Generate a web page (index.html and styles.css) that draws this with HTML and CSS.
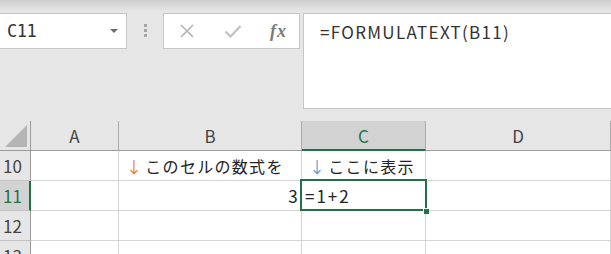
FILE: index.html
```html
<!DOCTYPE html>
<html lang="ja">
<head>
    <meta charset="UTF-8">
    <meta name="viewport" content="width=device-width, initial-scale=1.0">
    <title>FORMULATEXT</title>
    <link rel="stylesheet" href="styles.css">
</head>
<body>

    <!-- 数式バー -->
    <div class="toolbar">
        <div class="namebox">
            <span class="name">C11</span>
            <span class="caret"></span>
        </div>
        <div class="grip"><i></i><i></i><i></i></div>
        <div class="buttons">
            <svg class="btn" width="16" height="16" viewBox="0 0 16 16">
                <path d="M2 2 L14 14 M14 2 L2 14" stroke="#b3b3b3" stroke-width="1.6" fill="none"/>
            </svg>
            <svg class="btn" width="18" height="16" viewBox="0 0 18 16">
                <path d="M1.5 8.5 L6.5 13.5 L16.5 3" stroke="#c4c4c4" stroke-width="2.4" fill="none"/>
            </svg>
            <span class="fx">fx</span>
        </div>
        <div class="formula">=FORMULATEXT(B11)</div>
    </div>

    <!-- シート -->
    <div class="sheet">
        <div class="head corner"><span class="tri"></span></div>
        <div class="head col">A</div>
        <div class="head col">B</div>
        <div class="head col sel">C</div>
        <div class="head col">D</div>

        <div class="head row">10</div>
        <div class="cell"></div>
        <div class="cell"><span class="down orange">↓</span>このセルの数式を</div>
        <div class="cell"><span class="down blue">↓</span>ここに表示</div>
        <div class="cell"></div>

        <div class="head row sel">11</div>
        <div class="cell"></div>
        <div class="cell num">3</div>
        <div class="cell active">=1+2</div>
        <div class="cell"></div>

        <div class="head row">12</div>
        <div class="cell"></div>
        <div class="cell"></div>
        <div class="cell"></div>
        <div class="cell"></div>

        <div class="head row">13</div>
        <div class="cell"></div>
        <div class="cell"></div>
        <div class="cell"></div>
        <div class="cell"></div>
    </div>

</body>
</html>
```

FILE: styles.css
```css
body {
    margin: 0;
    width: 611px;
    height: 254px;
    overflow: hidden;
    background: #e6e6e6;
    font-family: "Noto Sans CJK JP", "Noto Sans", sans-serif;
}

/* 数式バー */
.toolbar {
    height: 121px;
    box-sizing: border-box;
    padding-top: 13px;
    display: flex;
    align-items: flex-start;
    background: linear-gradient(#cdcdcd, #e6e6e6 11px);
}
.toolbar > * {
    flex-shrink: 0;
}
.namebox {
    width: 127px;
    height: 36px;
    box-sizing: border-box;
    border: 1px solid #c6c6c6;
    border-left: none;
    background: #fff;
    display: flex;
    align-items: center;
    justify-content: space-between;
    padding: 0 8px 0 7px;
}
.name {
    font-family: "DejaVu Sans Mono", monospace;
    font-size: 17px;
    color: #333;
    letter-spacing: -0.5px;
}
.caret {
    width: 0;
    height: 0;
    border-left: 4px solid transparent;
    border-right: 4px solid transparent;
    border-top: 4px solid #6e6e6e;
}
.grip {
    display: flex;
    flex-direction: column;
    gap: 2px;
    margin: 11px 16px 0 17px;
}
.grip i {
    width: 3px;
    height: 3px;
    background: #a6a6a6;
}
.buttons {
    width: 137px;
    height: 36px;
    box-sizing: border-box;
    border: 1px solid #c6c6c6;
    background: #fff;
    display: flex;
    align-items: center;
    padding: 0 12px 0 15px;
    justify-content: space-between;
}
.fx {
    font-family: "Liberation Serif", serif;
    font-style: italic;
    font-weight: bold;
    font-size: 18px;
    color: #7a7a7a;
    letter-spacing: 1px;
}
.formula {
    margin-left: 3px;
    width: 330px;
    height: 96px;
    box-sizing: border-box;
    border: 1px solid #c6c6c6;
    background: #fff;
    padding: 6px 0 0 16px;
    font-size: 17px;
    letter-spacing: 1.3px;
    color: #333;
    line-height: 24px;
}

/* シート */
.sheet {
    display: grid;
    grid-template-columns: 31px 88px 183px 124px 1fr;
    grid-auto-rows: 30px;
    background: #fff;
}
.head {
    background: #e6e6e6;
    box-sizing: border-box;
    color: #444;
    font-size: 17px;
    display: flex;
    align-items: center;
}
.col {
    justify-content: center;
    border-right: 1px solid #ababab;
    border-bottom: 1px solid #9b9b9b;
}
.corner {
    border-right: 1px solid #9b9b9b;
    border-bottom: 1px solid #9b9b9b;
    align-items: flex-end;
    justify-content: flex-end;
    padding: 0 3px 3px 0;
}
.tri {
    width: 22px;
    height: 22px;
    background: #b4b4b4;
    clip-path: polygon(100% 0, 100% 100%, 0 100%);
}
.row {
    padding-left: 3px;
    border-right: 1px solid #9b9b9b;
    border-bottom: 1px solid #c3c3c3;
}
.head.sel {
    background: #d2d2d2;
    color: #217346;
}
.col.sel {
    border-bottom: 2px solid #217346;
}
.row.sel {
    border-right: 2px solid #217346;
}
.cell {
    box-sizing: border-box;
    border-right: 1px solid #d4d4d4;
    border-bottom: 1px solid #d4d4d4;
    font-size: 16px;
    letter-spacing: 1.3px;
    color: #222;
    display: flex;
    align-items: center;
    padding-left: 7px;
    white-space: nowrap;
}
.down {
    margin-right: 2px;
}
.orange {
    color: #ed7d31;
}
.blue {
    color: #5b9bd5;
}
.num {
    justify-content: flex-end;
    padding-right: 2px;
    font-size: 17px;
}
.active {
    position: relative;
    padding-left: 3px;
    font-size: 17px;
    letter-spacing: 2px;
}
.active::before {
    content: '';
    position: absolute;
    left: -2px;
    top: -2px;
    right: -2px;
    bottom: -1px;
    border: 2px solid #217346;
}
.active::after {
    content: '';
    position: absolute;
    right: -4px;
    bottom: -4px;
    width: 5px;
    height: 5px;
    background: #217346;
    border-left: 1px solid #fff;
    border-top: 1px solid #fff;
}
```
